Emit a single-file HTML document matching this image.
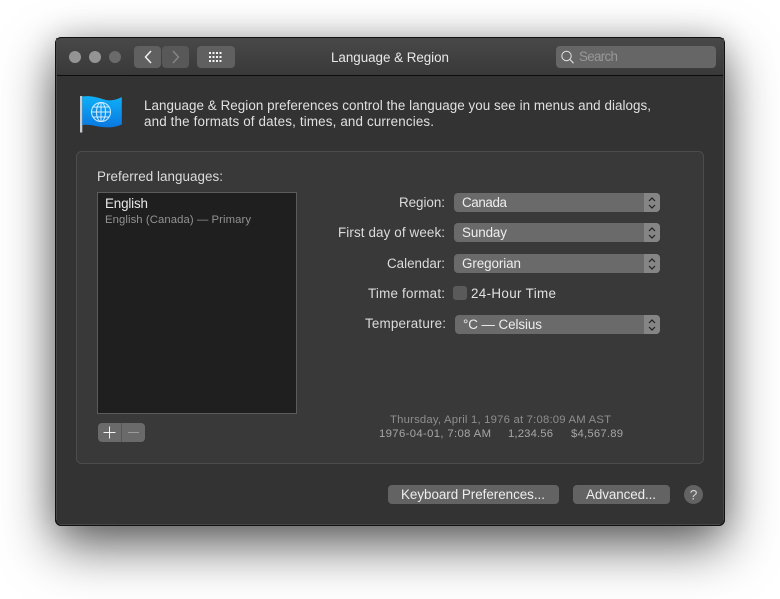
<!DOCTYPE html>
<html><head><meta charset="utf-8"><style>
html,body{margin:0;padding:0;background:#fff;width:780px;height:599px;overflow:hidden}
#win{position:absolute;left:55px;top:37px;width:670px;height:489px;border-radius:6px;background:#333;box-shadow:0 20px 52px rgba(0,0,0,.62),0 0 30px rgba(0,0,0,.16)}
svg{position:absolute;left:0;top:0;filter:blur(.35px)}
text{font-family:"Liberation Sans",sans-serif;font-size:13.4px;fill:#dcdcdc}
</style></head><body>
<div id="win"></div>
<svg width="780" height="599" viewBox="0 0 780 599" xmlns="http://www.w3.org/2000/svg">
<defs>
<linearGradient id="fl" x1="0" y1="0" x2="0" y2="1"><stop offset="0" stop-color="#0fb0f8"/><stop offset="1" stop-color="#0a78e0"/></linearGradient>
<linearGradient id="tb" x1="0" y1="0" x2="0" y2="1"><stop offset="0" stop-color="#484848"/><stop offset="1" stop-color="#393939"/></linearGradient>
</defs>
<rect x="55.500" y="37.500" width="669" height="488" rx="6" fill="#333" stroke="#111"/>
<rect x="56" y="38" width="668" height="37" rx="5" fill="url(#tb)"/>
<rect x="56" y="75" width="668" height="1" fill="#0e0e0e"/>
<path d="M56.500 520v-482M723.500 520v-482M60 524.500h660" fill="none" stroke="#474747" stroke-width="1"/>
<circle cx="75" cy="57" r="6" fill="#949494"/><circle cx="95" cy="57" r="6" fill="#949494"/><circle cx="115" cy="57" r="6" fill="#6a6a6a"/>
<rect x="134" y="46" width="27" height="22" rx="4" fill="#606060"/>
<rect x="162" y="46" width="27" height="22" rx="4" fill="#585858"/>
<path d="M151 51l-5.500 6 5.500 6" fill="none" stroke="#f0f0f0" stroke-width="1.500"/>
<path d="M173 51l5.500 6-5.500 6" fill="none" stroke="#858585" stroke-width="1.500"/>
<rect x="197" y="46" width="38" height="22" rx="4" fill="#606060"/>
<g fill="#f4f4f4"><rect x="209" y="52" width="2" height="2"/><rect x="212.500" y="52" width="2" height="2"/><rect x="216" y="52" width="2" height="2"/><rect x="219.500" y="52" width="2" height="2"/><rect x="209" y="56" width="2" height="2"/><rect x="212.500" y="56" width="2" height="2"/><rect x="216" y="56" width="2" height="2"/><rect x="219.500" y="56" width="2" height="2"/><rect x="209" y="60" width="2" height="2"/><rect x="212.500" y="60" width="2" height="2"/><rect x="216" y="60" width="2" height="2"/><rect x="219.500" y="60" width="2" height="2"/></g>
<text x="331" y="62" textLength="118" style="fill:#e8e8e8">Language &amp; Region</text>
<rect x="556" y="46" width="160" height="22" rx="4" fill="#666"/>
<circle cx="566.500" cy="56" r="4.700" fill="none" stroke="#e4e4e4" stroke-width="1"/>
<path d="M570 59.500l3.500 3.800" stroke="#e4e4e4" stroke-width="1.100"/>
<text x="579" y="61" textLength="39" style="fill:#989898">Search</text>

<path d="M80 96h2.300v36.500h-2.300z" fill="#c8ccd0"/>
<path d="M82.300 96.500c7-1 14 .5 20 2.500s12 2 19.500-2v27.500c-6 2.500-12 3.500-19.500 2.500s-13-3-20-2z" fill="url(#fl)"/>
<g fill="none" stroke="#cfeeff" stroke-width="1">
<circle cx="101" cy="112" r="9.500"/><ellipse cx="101" cy="112" rx="4.500" ry="9.500"/><path d="M101 102.500v19M91.500 112h19M93 107h16M93 117h16"/>
</g>
<text x="144" y="110" textLength="507" style="fill:#e0e0e0">Language &amp; Region preferences control the language you see in menus and dialogs,</text>
<text x="144" y="126" textLength="290" style="fill:#e0e0e0">and the formats of dates, times, and currencies.</text>

<rect x="76.500" y="151.500" width="627" height="312" rx="5" fill="#393939" stroke="#4c4c4c"/>
<text x="97" y="181" textLength="126" style="fill:#dcdcdc">Preferred languages:</text>
<rect x="97.500" y="192.500" width="199" height="221" fill="#1f1f1f" stroke="#5c5c5c"/>
<text x="105" y="208" textLength="43" style="fill:#e8e8e8">English</text>
<text x="105" y="223" textLength="146" style="font-size:11.300px;fill:#929292">English (Canada) — Primary</text>

<rect x="98" y="423" width="47" height="19" rx="4" fill="#6a6a6a"/>
<rect x="121" y="423" width="1" height="19" fill="#555"/>
<path d="M103.500 432.500h12M109.500 426.500v12" stroke="#f4f4f4" stroke-width="1"/>
<path d="M128 432.500h11" stroke="#9a9a9a" stroke-width="1"/>

<text x="399" y="207" textLength="46" style="fill:#dcdcdc">Region:</text>
<text x="338" y="237" textLength="107" style="fill:#dcdcdc">First day of week:</text>
<text x="387" y="268" textLength="58" style="fill:#dcdcdc">Calendar:</text>
<text x="368" y="298" textLength="77" style="fill:#dcdcdc">Time format:</text>
<text x="365" y="328" textLength="81" style="fill:#dcdcdc">Temperature:</text>

<g>
<rect x="454" y="193" width="206" height="19" rx="4" fill="#6a6a6a"/><path d="M644 193h12a4 4 0 0 1 4 4v11a4 4 0 0 1-4 4h-12z" fill="#858585"/>
<path d="M649 201l3-3 3 3M649 205l3 3 3-3" fill="none" stroke="#222" stroke-width="1.200"/>
<text x="462" y="207" textLength="45" style="fill:#eee">Canada</text>
</g>
<g>
<rect x="454" y="223" width="206" height="19" rx="4" fill="#6a6a6a"/><path d="M644 223h12a4 4 0 0 1 4 4v11a4 4 0 0 1-4 4h-12z" fill="#858585"/>
<path d="M649 231l3-3 3 3M649 235l3 3 3-3" fill="none" stroke="#222" stroke-width="1.200"/>
<text x="462" y="237" textLength="45" style="fill:#eee">Sunday</text>
</g>
<g>
<rect x="454" y="254" width="206" height="19" rx="4" fill="#6a6a6a"/><path d="M644 254h12a4 4 0 0 1 4 4v11a4 4 0 0 1-4 4h-12z" fill="#858585"/>
<path d="M649 262l3-3 3 3M649 266l3 3 3-3" fill="none" stroke="#222" stroke-width="1.200"/>
<text x="462" y="268" textLength="59" style="fill:#eee">Gregorian</text>
</g>
<rect x="453" y="286" width="14" height="14" rx="3" fill="#5a5a5a"/>
<text x="471" y="298" textLength="85" style="fill:#e0e0e0">24-Hour Time</text>
<g>
<rect x="455" y="315" width="205" height="19" rx="4" fill="#6a6a6a"/><path d="M644 315h12a4 4 0 0 1 4 4v11a4 4 0 0 1-4 4h-12z" fill="#858585"/>
<path d="M649 323l3-3 3 3M649 327l3 3 3-3" fill="none" stroke="#222" stroke-width="1.200"/>
<text x="463" y="329" textLength="79" style="fill:#eee">°C — Celsius</text>
</g>

<text x="390" y="423" textLength="221" style="font-size:11.300px;fill:#8e8e8e">Thursday, April 1, 1976 at 7:08:09 AM AST</text>
<text x="379" y="437" textLength="112" style="font-size:11.300px;fill:#a6a6a6">1976-04-01, 7:08 AM</text>
<text x="508" y="437" textLength="45" style="font-size:11.300px;fill:#a6a6a6">1,234.56</text>
<text x="571" y="437" textLength="52" style="font-size:11.300px;fill:#a6a6a6">$4,567.89</text>

<rect x="388" y="485" width="171" height="19" rx="4" fill="#636363"/>
<text x="401" y="499" textLength="144" style="fill:#eee">Keyboard Preferences...</text>
<rect x="573" y="485" width="97" height="19" rx="4" fill="#636363"/>
<text x="586" y="499" textLength="70" style="fill:#eee">Advanced...</text>
<circle cx="693.500" cy="494.500" r="9.500" fill="#636363"/>
<text x="693.500" y="499.500" text-anchor="middle" style="font-size:14px;fill:#d4d4d4">?</text>
</svg>
</body></html>
